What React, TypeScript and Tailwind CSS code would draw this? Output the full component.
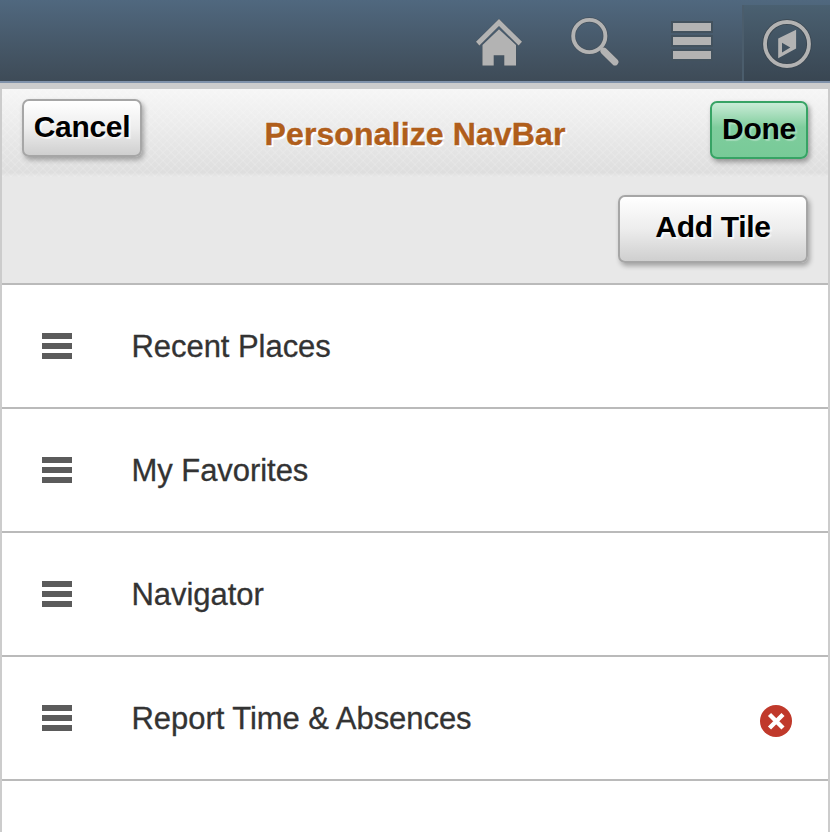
import React from "react";

const tiles = [
  { label: "Recent Places", removable: false },
  { label: "My Favorites", removable: false },
  { label: "Navigator", removable: false },
  { label: "Report Time & Absences", removable: true },
];

const grayButton =
  "rounded-[7px] border-2 border-[#a6a6a6] bg-linear-to-b from-white via-[#ededed] to-[#cfcfcf] text-center text-[30px] font-bold tracking-[-0.3px] text-black shadow-[2px_3px_5px_rgba(0,0,0,0.3)] [text-shadow:2px_2px_1px_rgba(255,255,255,0.7)]";

function HomeIcon() {
  return (
    <svg width="50" height="52" viewBox="0 0 50 52" fill="#b3b3b3" stroke="#46525d" strokeWidth="1" paintOrder="stroke">
      <path d="M25 1 48 23.8 44.6 27.6 25 8 5.4 27.6 2 23.8Z" />
      <path d="M25 11.2 42 27V47.5H30.3V37.3H19.7V47.5H8.5V27Z" />
    </svg>
  );
}

function SearchIcon() {
  return (
    <svg width="52" height="52" viewBox="0 0 52 52" fill="none" strokeLinecap="round">
      <g stroke="#46525d">
        <circle cx="21.3" cy="19" r="16.1" strokeWidth="5.4" />
        <path d="M35.8 34 47 45" strokeWidth="8.2" />
      </g>
      <g stroke="#b3b3b3">
        <circle cx="21.3" cy="19" r="16.1" strokeWidth="3.9" />
        <path d="M35.8 34 47 45" strokeWidth="6.8" />
      </g>
    </svg>
  );
}

function CompassIcon() {
  return (
    <svg width="52" height="52" viewBox="0 0 52 52">
      <circle cx="26" cy="26" r="22" fill="none" stroke="#3a4650" strokeWidth="5.5" />
      <circle cx="26" cy="26" r="22" fill="none" stroke="#b3b3b3" strokeWidth="3.8" />
      <path
        d="M35.1 11.8V30.5L17.2 40.2V20.5ZM21 24.7V34.5L29.3 29.6Z"
        fill="#b3b3b3"
        fillRule="evenodd"
      />
    </svg>
  );
}

function Grip() {
  return (
    <div className="flex w-[30px] flex-col gap-1">
      <div className="h-[6px] bg-[#5b5b5b]" />
      <div className="h-[6px] bg-[#5b5b5b]" />
      <div className="h-[6px] bg-[#5b5b5b]" />
    </div>
  );
}

export default function App() {
  return (
    <div className="flex h-[832px] w-[830px] flex-col overflow-hidden bg-white font-['Liberation_Sans',Arial,sans-serif]">
      <header className="flex h-[83px] shrink-0 border-b-2 border-[#8092aa] bg-linear-to-b from-[#50687f] to-[#3e4b57]">
        <div className="flex flex-1">
          <div className="ml-[474px] pt-[18px]"><HomeIcon /></div>
          <div className="ml-[44px] pt-[17px]"><SearchIcon /></div>
          <div className="mt-[21px] ml-[51px] flex w-[42px] flex-col gap-[2px]">
            <div className="h-3 border-2 border-[#43525e] bg-[#b3b3b3]" />
            <div className="h-3 border-2 border-[#43525e] bg-[#b3b3b3]" />
            <div className="h-3 border-2 border-[#43525e] bg-[#b3b3b3]" />
          </div>
        </div>
        <div className="mt-[5px] w-[88px] border-l-2 border-[#4b5d6c] bg-linear-to-b from-[#4a6071] to-[#394652] pt-[13px] pl-[17px]">
          <CompassIcon />
        </div>
      </header>
      <div className="h-[6px] shrink-0 bg-[#cccccc]" />
      <main className="flex flex-1 flex-col border-x-2 border-[#cccccc]">
        <div className="flex h-[88px] shrink-0 items-start bg-[repeating-linear-gradient(45deg,rgba(255,255,255,0.1)_0px,rgba(255,255,255,0.1)_2px,transparent_2px,transparent_5.657px),repeating-linear-gradient(-45deg,rgba(255,255,255,0.1)_0px,rgba(255,255,255,0.1)_2px,transparent_2px,transparent_5.657px),linear-gradient(to_bottom,#f6f6f6,#dedede_95%,#e8e8e8)] px-5">
          <button className={`${grayButton} mt-[10px] h-[58px] w-[120px] pb-[3px] leading-[50px]`}>Cancel</button>
          <h1 className="mt-[25px] flex-1 pl-[122.5px] text-[32px] leading-[40px] font-bold tracking-[0.12px] whitespace-nowrap text-[#b05e1b] [-webkit-text-stroke:0.4px_#b05e1b] [text-shadow:1px_1px_0_#fff,2px_2px_0_#fff]">Personalize NavBar</h1>
          <button className="mt-[12px] h-[58px] w-[98px] rounded-[7px] border-2 border-[#37a365] bg-linear-to-b from-[#c9ecd7] via-[#7fcd9d] via-45% to-[#78ca98] pb-[3px] text-center text-[30px] leading-[50px] font-bold tracking-[-0.3px] text-black shadow-[2px_3px_5px_rgba(0,0,0,0.35)] [text-shadow:2px_2px_1px_rgba(255,255,255,0.3)]">Done</button>
        </div>
        <div className="flex h-[108px] shrink-0 justify-end border-b-2 border-[#bababa] bg-[#e8e8e8] pt-[18px] pr-5">
          <button className={`${grayButton} h-[68px] w-[190px] pb-[5px] leading-[58px]`}>Add Tile</button>
        </div>
        <ul>
          {tiles.map((tile) => (
            <li key={tile.label} className="flex h-[124px] items-center border-b-2 border-[#bababa] pl-10">
              <Grip />
              <span className="ml-[59.5px] flex-1 pt-[2px] text-[31px] leading-[40px] tracking-[-0.05px] text-[#333333] [-webkit-text-stroke:0.3px_#333333]">{tile.label}</span>
              {tile.removable && (
                <button className="mt-[6px] mr-9" aria-label="Remove">
                  <svg width="32" height="32" viewBox="0 0 32 32">
                    <circle cx="16" cy="16" r="16" fill="#c0392b" />
                    <path d="M9.5 9.5 23 23M23 9.5 9.5 23" stroke="#fff" strokeWidth="4.4" />
                  </svg>
                </button>
              )}
            </li>
          ))}
        </ul>
      </main>
    </div>
  );
}
